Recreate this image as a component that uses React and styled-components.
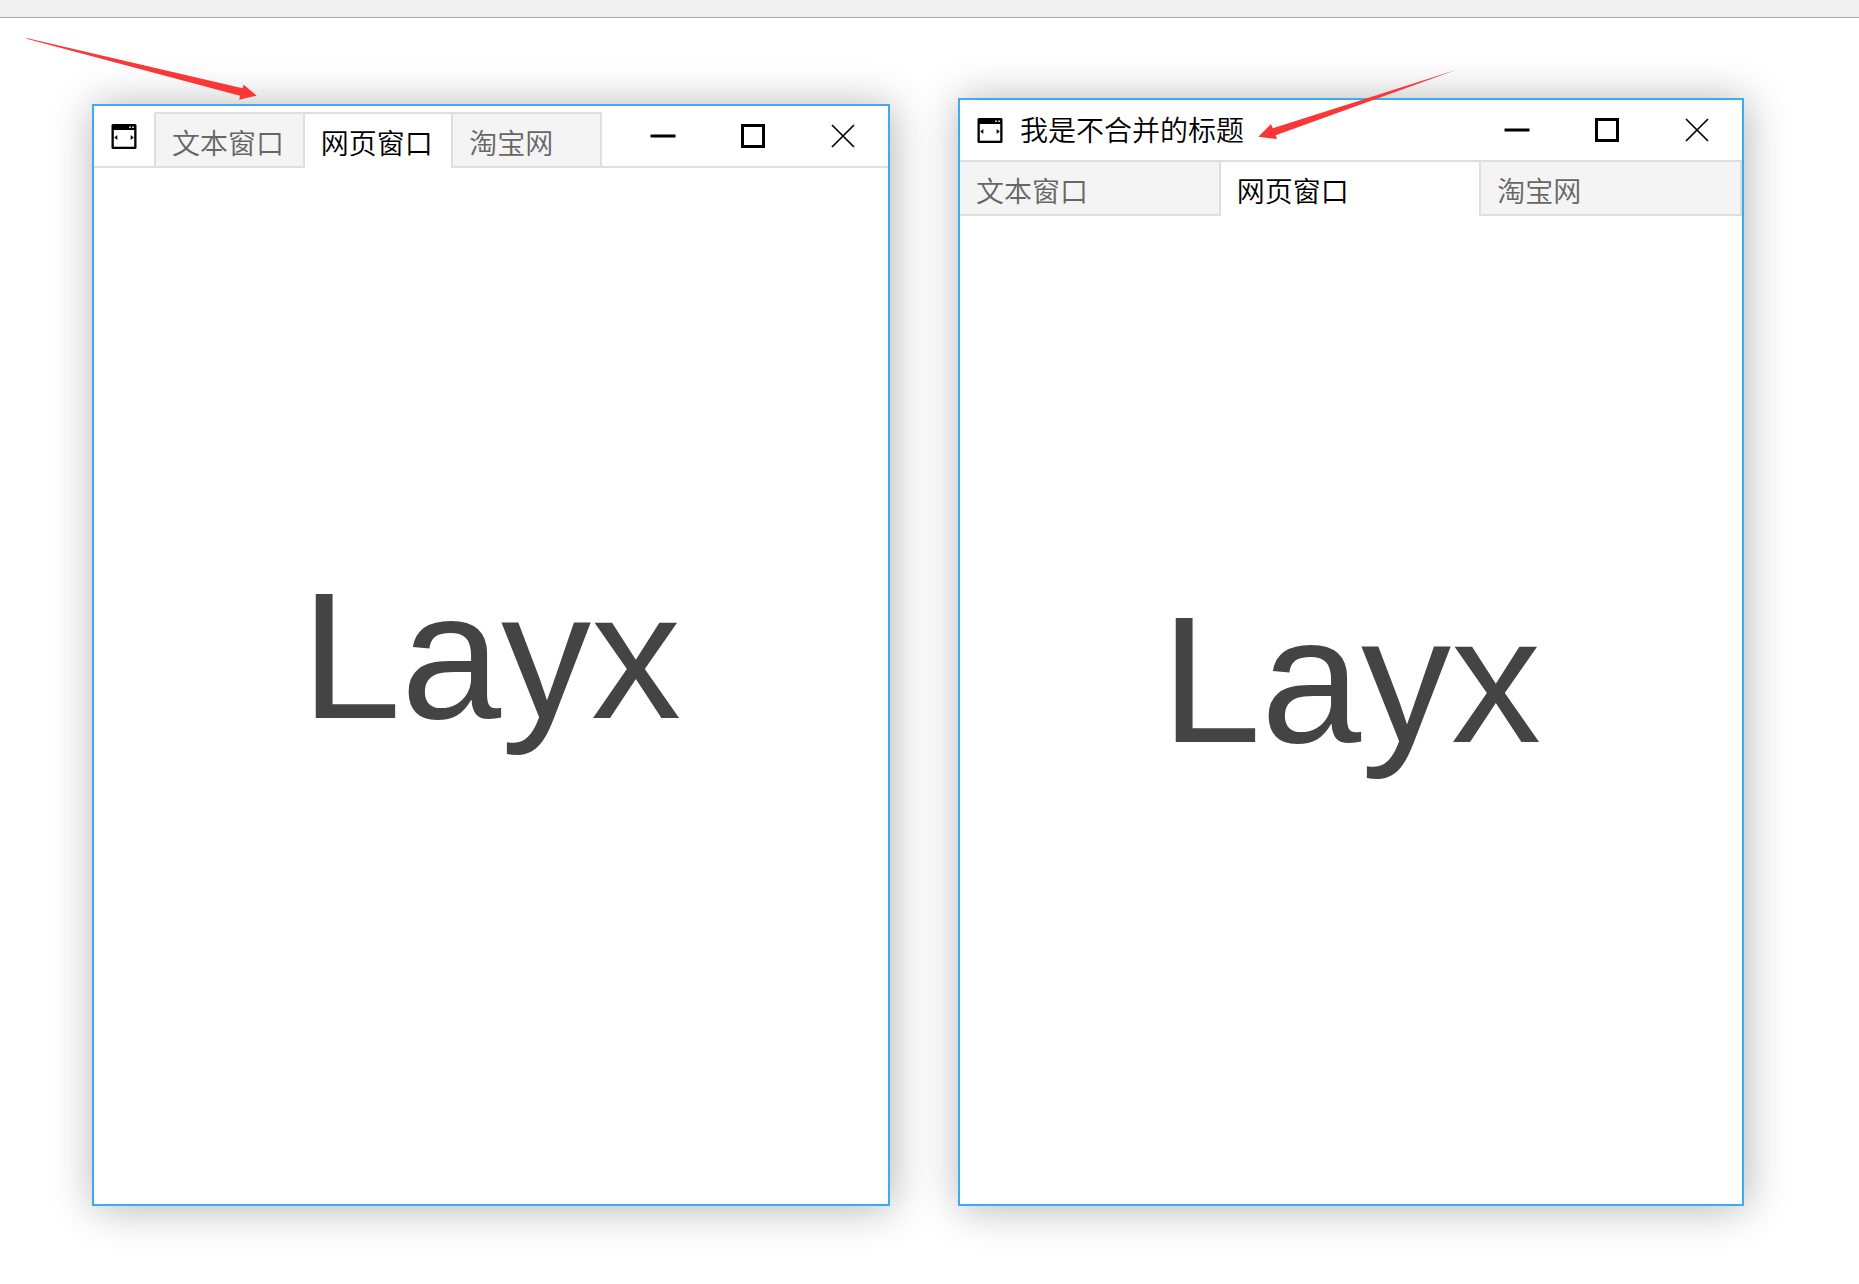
import { useState } from "react";
import styled, { createGlobalStyle } from "styled-components";

const tabs = ["文本窗口", "网页窗口", "淘宝网"];

const WindowIcon = () => (
  <svg width="26" height="26" viewBox="0 0 26 26" aria-hidden="true">
    <rect x="0.5" y="1" width="25" height="25" rx="1.5" fill="#000" />
    <rect x="2.8" y="7" width="20.4" height="16.7" fill="#fff" />
    <rect x="18" y="3.5" width="2" height="1.5" fill="#ccc" />
    <rect x="21" y="3.5" width="2" height="1.5" fill="#ccc" />
    <path d="M3.3 14.5 L6.3 12 V17 Z" fill="#000" />
    <path d="M22.7 14.5 L19.7 12 V17 Z" fill="#000" />
  </svg>
);

const MinimizeIcon = () => (
  <svg width="26" height="26" viewBox="0 0 26 26" aria-hidden="true">
    <path d="M0.5 13 H25.5" stroke="#000" strokeWidth="3" />
  </svg>
);

const MaximizeIcon = () => (
  <svg width="24" height="24" viewBox="0 0 24 24" aria-hidden="true">
    <path d="M1.5 1.5 H22.5 V22.5 H1.5 Z" fill="none" stroke="#000" strokeWidth="3" />
  </svg>
);

const CloseIcon = () => (
  <svg width="24" height="24" viewBox="0 0 24 24" aria-hidden="true">
    <path d="M1 1 L23 23 M23 1 L1 23" stroke="#000" strokeWidth="1.7" />
  </svg>
);

const TabList = ({ merged }) => {
  const [active, setActive] = useState(1);

  return (
    <TabBar role="tablist" $merged={merged}>
      {tabs.map((tab, index) => (
        <Tab
          key={tab}
          type="button"
          role="tab"
          aria-selected={active === index}
          $active={active === index}
          onClick={() => setActive(index)}
        >
          {tab}
        </Tab>
      ))}
    </TabBar>
  );
};

const LayxWindow = ({ title, merged, children }) => {
  return (
    <WindowFrame $merged={merged}>
      <TitleBar>
        <IconBox>
          <WindowIcon />
        </IconBox>
        {merged ? <TabList merged /> : <Title>{title}</Title>}
        <Controls>
          <ControlButton type="button" aria-label="最小化">
            <MinimizeIcon />
          </ControlButton>
          <ControlButton type="button" aria-label="最大化">
            <MaximizeIcon />
          </ControlButton>
          <ControlButton type="button" aria-label="关闭">
            <CloseIcon />
          </ControlButton>
        </Controls>
      </TitleBar>
      {!merged && <TabList />}
      <Content>
        <Logo>Layx</Logo>
      </Content>
      {children}
    </WindowFrame>
  );
};

const App = () => {
  return (
    <Page>
      <GlobalStyle />
      <TopBar />
      <Desktop>
        <LayxWindow merged>
          <MergedArrow width="232" height="64" viewBox="0 0 232 64" aria-hidden="true">
            <path d="M0.5 0 L216.5 50.3 L217.7 46.7 L230.7 57.7 L213.3 61.7 L214 57.7 L0.5 0.8 Z" />
          </MergedArrow>
        </LayxWindow>
        <LayxWindow title="我是不合并的标题">
          <TitleArrow width="200" height="70" viewBox="0 0 200 70" aria-hidden="true">
            <path d="M198 0 L14.7 58.3 L13 54 L0.3 66.7 L19 69 L17.7 65.3 Z" />
          </TitleArrow>
        </LayxWindow>
      </Desktop>
    </Page>
  );
};

export default App;

const GlobalStyle = createGlobalStyle`
  * {
    box-sizing: border-box;
  }

  body {
    margin: 0;
    background-color: #fff;
    font-family: "Noto Sans CJK SC", sans-serif;
    font-size: 28px;
    font-weight: 350;
  }

  button {
    margin: 0;
    padding: 0;
    border: 0;
    background: none;
    font: inherit;
    cursor: pointer;
  }
`;

const Page = styled.div`
  display: flex;
  flex-direction: column;
  min-height: 100vh;
`;

const TopBar = styled.header`
  height: 18px;
  border-bottom: 1px solid #aaa;
  background-color: #f1f1f1;
`;

const Desktop = styled.main`
  display: flex;
  flex: 1;
  gap: 68px;
  padding: 80px 115px 78px 92px;
`;

const WindowFrame = styled.section`
  position: relative;
  display: flex;
  flex: ${({ $merged }) => ($merged ? 798 : 786)} 1 0;
  flex-direction: column;
  min-width: 0;
  margin-top: ${({ $merged }) => ($merged ? "6px" : "0")};
  border: 2px solid #3baced;
  background-color: #fff;
  box-shadow: 2px 2px 40px rgba(0, 0, 0, 0.3);
`;

const TitleBar = styled.div`
  display: flex;
  height: 62px;
  border-bottom: 2px solid #dedede;
`;

const IconBox = styled.div`
  display: flex;
  flex: none;
  align-items: center;
  justify-content: center;
  width: 60px;
`;

const Title = styled.h2`
  margin: 0;
  color: #000;
  font-size: 28px;
  font-weight: 350;
  line-height: 58px;
  white-space: nowrap;
`;

const Controls = styled.div`
  display: flex;
  margin-left: auto;
`;

const ControlButton = styled.button`
  display: flex;
  align-items: center;
  justify-content: center;
  width: 90px;

  &:hover {
    background-color: #eee;
  }
`;

const TabBar = styled.div`
  display: flex;
  flex: none;
  ${({ $merged }) =>
    $merged
      ? `
    width: 448px;
    margin: 6px 0 -2px;
    border-top: 2px solid #dedede;
    border-left: 2px solid #dedede;
  `
      : `
    height: 54px;
  `}
`;

const Tab = styled.button`
  display: flex;
  flex: 1;
  align-items: flex-start;
  padding: 5px 0 0 16px;
  border-right: 2px solid #dedede;
  border-bottom: ${({ $active }) => ($active ? "0" : "2px solid #dedede")};
  background-color: ${({ $active }) => ($active ? "#fff" : "#f4f4f4")};
  color: ${({ $active }) => ($active ? "#000" : "#666")};
  line-height: 46px;
  white-space: nowrap;
`;

const Content = styled.div`
  display: flex;
  flex: 1;
  align-items: center;
  justify-content: center;
  padding-bottom: 60px;
`;

const Logo = styled.h1`
  margin: 0;
  color: #444;
  font-family: "Liberation Sans", Arial, sans-serif;
  font-size: 180px;
  font-weight: 400;
  line-height: 200px;
`;

const Arrow = styled.svg`
  position: absolute;
  fill: #fb3636;
  pointer-events: none;
`;

const MergedArrow = styled(Arrow)`
  top: -68px;
  left: -68px;
`;

const TitleArrow = styled(Arrow)`
  top: -30px;
  left: 298px;
`;
